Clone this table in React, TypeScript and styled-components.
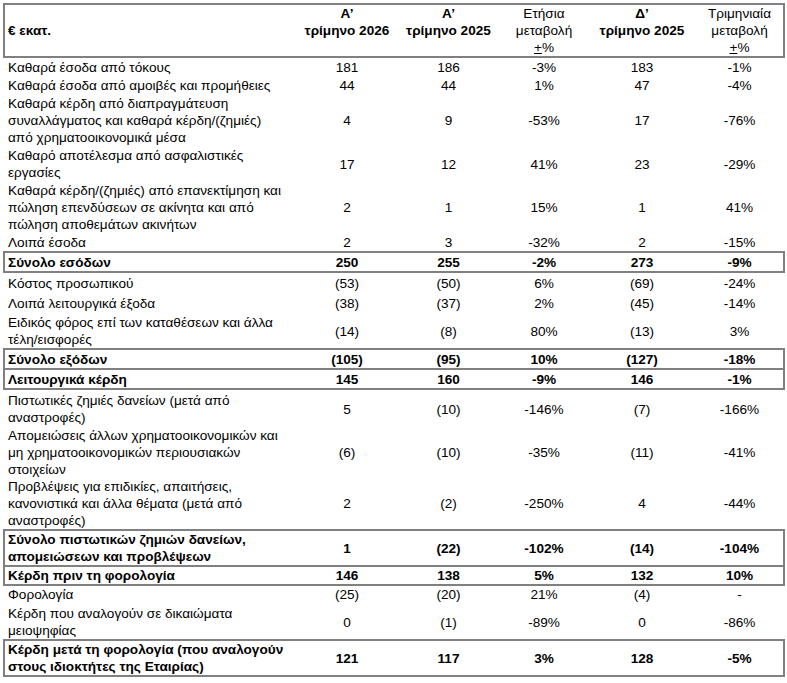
import React from 'react';
import styled, { createGlobalStyle } from 'styled-components';

const BORDER = '#808080';
const COLS = '292px 100px 103px 88px 108px 87px';

const GlobalStyle = createGlobalStyle`
  html, body { margin: 0; padding: 0; background: #ffffff; }
  body {
    font-family: "Liberation Sans", Arial, sans-serif;
    font-size: 13.6px;
    color: #000000;
  }
`;

const Page = styled.div`
  padding: 3px 0 0 3px;
  width: 782px;
`;

const Table = styled.div`
  display: flex;
  flex-direction: column;
  width: 782px;
`;

const HeaderRow = styled.div`
  display: grid;
  grid-template-columns: ${COLS};
  border: 2px solid ${BORDER};
  line-height: 17px;
`;

const HeaderLabel = styled.div`
  align-self: center;
  padding-left: 3px;
  font-weight: bold;
`;

const HeaderCell = styled.div<{ $bold?: boolean }>`
  text-align: center;
  white-space: pre-line;
  font-weight: ${(p) => (p.$bold ? 'bold' : 'normal')};
`;

const Row = styled.div<{ $boxed?: boolean; $joined?: boolean; $pt: number }>`
  display: grid;
  grid-template-columns: ${COLS};
  line-height: 17px;
  padding-top: ${(p) => p.$pt}px;
  border-left: 2px solid ${(p) => (p.$boxed ? BORDER : 'transparent')};
  border-right: 2px solid ${(p) => (p.$boxed ? BORDER : 'transparent')};
  border-top: ${(p) => (p.$boxed && !p.$joined ? `2px solid ${BORDER}` : 'none')};
  border-bottom: ${(p) => (p.$boxed ? `2px solid ${BORDER}` : 'none')};
  font-weight: ${(p) => (p.$boxed ? 'bold' : 'normal')};
`;

const Label = styled.div`
  padding-left: 3px;
  white-space: pre-line;
`;

const Value = styled.div`
  align-self: center;
  text-align: center;
  white-space: nowrap;
`;

type RowData = {
  label: string;
  values: string[];
  total?: boolean;
  joined?: boolean;
  pt?: number;
};

const rows: RowData[] = [
  { label: 'Καθαρά έσοδα από τόκους', values: ['181', '186', '-3%', '183', '-1%'] },
  { label: 'Καθαρά έσοδα από αμοιβές και προμήθειες', values: ['44', '44', '1%', '47', '-4%'] },
  {
    label: 'Καθαρά κέρδη από διαπραγμάτευση\nσυναλλάγματος και καθαρά κέρδη/(ζημιές)\nαπό χρηματοοικονομικά μέσα',
    values: ['4', '9', '-53%', '17', '-76%'],
  },
  { label: 'Καθαρό αποτέλεσμα από ασφαλιστικές\nεργασίες', values: ['17', '12', '41%', '23', '-29%'] },
  {
    label: 'Καθαρά κέρδη/(ζημιές) από επανεκτίμηση και\nπώληση επενδύσεων σε ακίνητα και από\nπώληση αποθεμάτων ακινήτων',
    values: ['2', '1', '15%', '1', '41%'],
  },
  { label: 'Λοιπά έσοδα', values: ['2', '3', '-32%', '2', '-15%'] },
  { label: 'Σύνολο εσόδων', total: true, values: ['250', '255', '-2%', '273', '-9%'] },
  { label: 'Κόστος προσωπικού', pt: 2, values: ['(53)', '(50)', '6%', '(69)', '-24%'] },
  { label: 'Λοιπά λειτουργικά έξοδα', pt: 3, values: ['(38)', '(37)', '2%', '(45)', '-14%'] },
  { label: 'Ειδικός φόρος επί των καταθέσεων και άλλα\nτέλη/εισφορές', pt: 2, values: ['(14)', '(8)', '80%', '(13)', '3%'] },
  { label: 'Σύνολο εξόδων', total: true, values: ['(105)', '(95)', '10%', '(127)', '-18%'] },
  { label: 'Λειτουργικά κέρδη', total: true, joined: true, values: ['145', '160', '-9%', '146', '-1%'] },
  { label: 'Πιστωτικές ζημιές δανείων (μετά από\nαναστροφές)', pt: 2, values: ['5', '(10)', '-146%', '(7)', '-166%'] },
  {
    label: 'Απομειώσεις άλλων χρηματοοικονομικών και\nμη χρηματοοικονομικών περιουσιακών\nστοιχείων',
    values: ['(6)', '(10)', '-35%', '(11)', '-41%'],
  },
  {
    label: 'Προβλέψεις για επιδικίες, απαιτήσεις,\nκανονιστικά και άλλα θέματα (μετά από\nαναστροφές)',
    pt: 0,
    values: ['2', '(2)', '-250%', '4', '-44%'],
  },
  {
    label: 'Σύνολο πιστωτικών ζημιών δανείων,\nαπομειώσεων και προβλέψεων',
    total: true,
    pt: 0,
    values: ['1', '(22)', '-102%', '(14)', '-104%'],
  },
  { label: 'Κέρδη πριν τη φορολογία', total: true, joined: true, pt: 0, values: ['146', '138', '5%', '132', '10%'] },
  { label: 'Φορολογία', pt: 0, values: ['(25)', '(20)', '21%', '(4)', '-'] },
  { label: 'Κέρδη που αναλογούν σε δικαιώματα\nμειοψηφίας', pt: 2, values: ['0', '(1)', '-89%', '0', '-86%'] },
  {
    label: 'Κέρδη μετά τη φορολογία (που αναλογούν\nστους ιδιοκτήτες της Εταιρίας)',
    total: true,
    pt: 0,
    values: ['121', '117', '3%', '128', '-5%'],
  },
];

const PlusMinus = () => (
  <>
    <u>+</u>%
  </>
);

export default function App() {
  return (
    <>
      <GlobalStyle />
      <Page>
        <Table>
          <HeaderRow>
            <HeaderLabel>€ εκατ.</HeaderLabel>
            <HeaderCell $bold>{'Α’\nτρίμηνο 2026'}</HeaderCell>
            <HeaderCell $bold>{'Α’\nτρίμηνο 2025'}</HeaderCell>
            <HeaderCell>
              {'Ετήσια\nμεταβολή\n'}
              <PlusMinus />
            </HeaderCell>
            <HeaderCell $bold>{'Δ’\nτρίμηνο 2025'}</HeaderCell>
            <HeaderCell>
              {'Τριμηνιαία\nμεταβολή\n'}
              <PlusMinus />
            </HeaderCell>
          </HeaderRow>
          {rows.map((r, i) => (
            <Row key={i} $boxed={r.total} $joined={r.joined} $pt={r.pt ?? 1}>
              <Label>{r.label}</Label>
              {r.values.map((v, j) => (
                <Value key={j}>{v}</Value>
              ))}
            </Row>
          ))}
        </Table>
      </Page>
    </>
  );
}
